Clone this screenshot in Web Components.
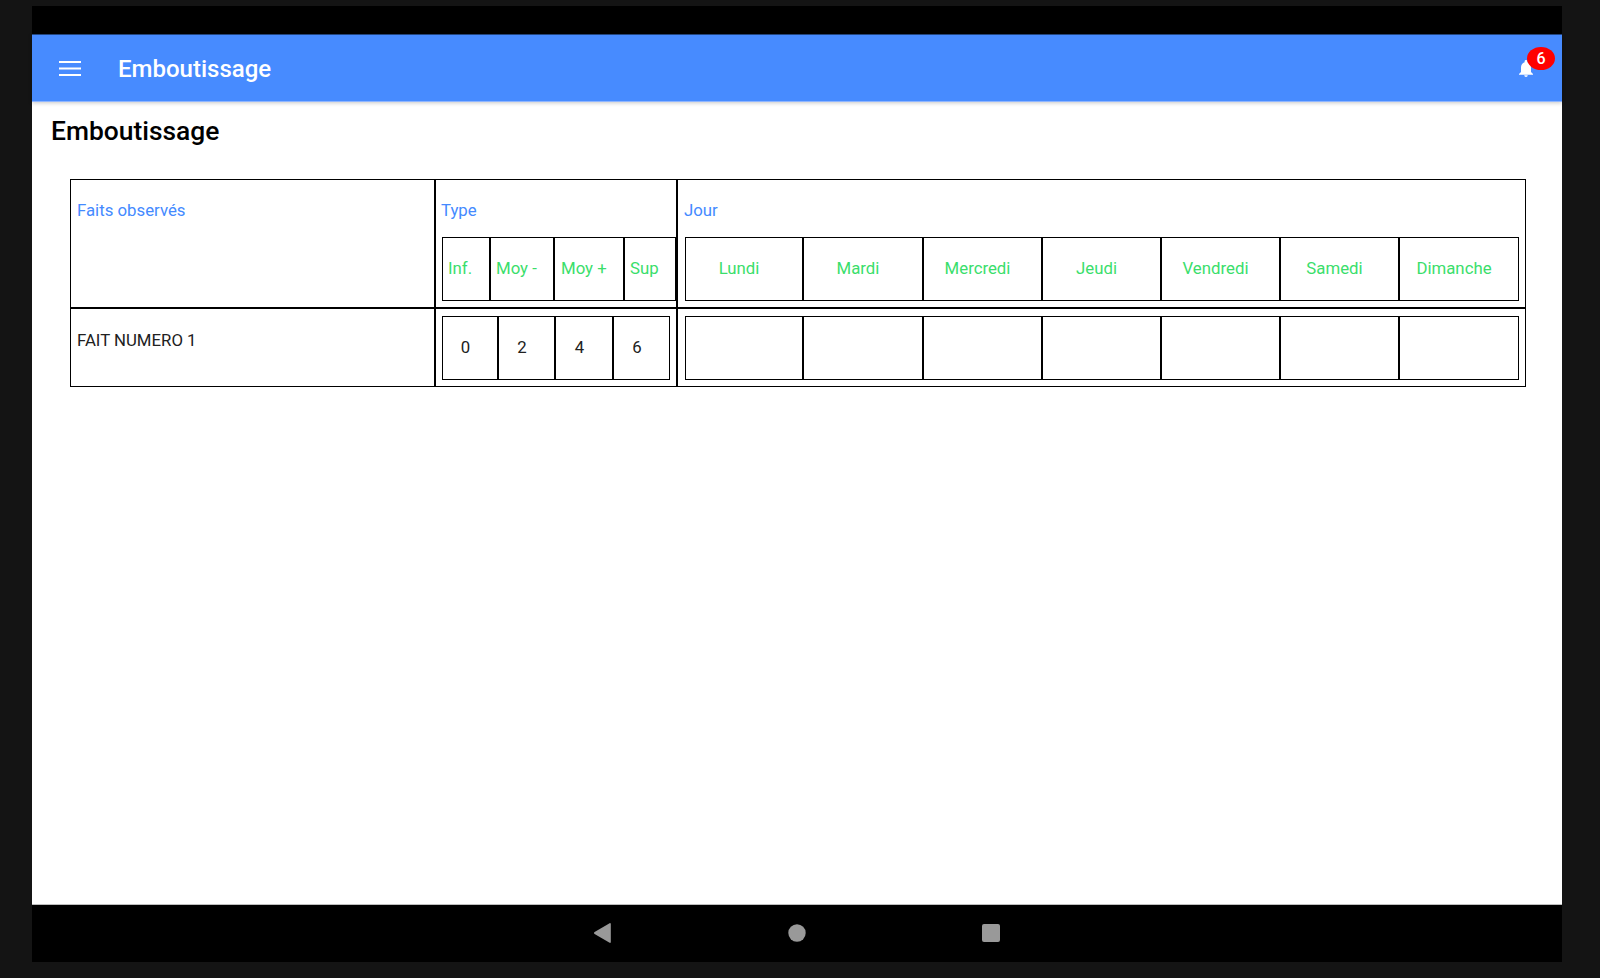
<!DOCTYPE html>
<html lang="fr">
<head>
<meta charset="utf-8">
<title>Emboutissage</title>
<style>
  html, body { margin: 0; height: 100%; background: #141414; }
  body { font-family: Roboto, "Liberation Sans", sans-serif; }
</style>
</head>
<body>
<device-frame>
  <app-toolbar slot="top" title="Emboutissage" count="6"></app-toolbar>
  <h-title>Emboutissage</h-title>
  <obs-table></obs-table>
</device-frame>

<script>
class DeviceFrame extends HTMLElement {
  constructor() {
    super();
    this.attachShadow({ mode: 'open' });
    this.shadowRoot.innerHTML = `
    <style>
      :host { display: block; height: 978px; padding: 6px 38px 16px 32px; box-sizing: border-box; background: #141414; }
      .screen { height: 100%; display: flex; flex-direction: column; background: #000; }
      .status { height: 28px; flex: none; }
      .content { flex: 1; min-height: 0; background: #fff; }
      .nav {
        height: 58px; flex: none; display: flex; align-items: center; justify-content: center; gap: 177px;
        border-top: 1px solid #bdbdbd; box-sizing: border-box; padding-bottom: 1px;
      }
      svg { display: block; }
      .recents { margin-left: -1px; }
    </style>
    <div class="screen">
      <div class="status"></div>
      <slot name="top"></slot>
      <div class="content"><slot></slot></div>
      <div class="nav">
        <svg width="17" height="20" viewBox="0 0 17 20"><path d="M15.600 0.200c.7-.3 1.200 .1 1.200 .8v18c0 .7-.5 1.100-1.200 .8L.6 11.100c-.8-.5-.8-1.700 0-2.200z" fill="#999"/></svg>
        <svg width="18" height="18" viewBox="0 0 18 18"><circle cx="9" cy="9" r="8.700" fill="#999"/></svg>
        <svg class="recents" width="18" height="18" viewBox="0 0 18 18"><rect width="18" height="18" rx="2" fill="#999"/></svg>
      </div>
    </div>`;
  }
}

class AppToolbar extends HTMLElement {
  constructor() {
    super();
    this.attachShadow({ mode: 'open' });
    const title = this.getAttribute('title');
    const count = this.getAttribute('count');
    this.shadowRoot.innerHTML = `
    <style>
      :host {
        display: flex; align-items: center; height: 68px; flex: none; position: relative; z-index: 1;
        box-sizing: border-box; border-top: 1px solid #234680; border-bottom: 1px solid #8fb6ff;
        background: #478bff; color: #fff; box-shadow: 0 1px 4px rgba(0,0,0,.22);
        padding: 0 7px 0 27px;
      }
      .menu { display: block; margin: 1px 37px 0 0; }
      h1 { flex: 1; margin: 1px 0 0; font-size: 24px; font-weight: 500; line-height: 1; }
      .bell { position: relative; width: 28px; height: 40px; }
      .bell svg { position: absolute; left: -8px; top: 12px; }
      .badge {
        position: absolute; left: 0; top: -1px; width: 28px; height: 23px; border-radius: 50%;
        background: #f00; font-size: 16px; font-weight: 500; line-height: 23px; text-align: center;
      }
    </style>
    <svg class="menu" width="22" height="15" viewBox="0 0 22 15"><path d="M0 0h22v2H0zM0 6.500h22v2H0zM0 13h22v2H0z" fill="#fff"/></svg>
    <h1>${title}</h1>
    <div class="bell">
      <svg width="14" height="17" viewBox="0 0 14 17"><path d="M7 17a1.800 1.800 0 0 0 1.800-1.700H5.200A1.800 1.800 0 0 0 7 17zm5-5V7.500c0-2.600-1.300-4.700-3.600-5.300V1.400a1.400 1.400 0 0 0-2.800 0v.8C3.300 2.800 2 4.900 2 7.500V12l-2 2v.8h14V14z" fill="#fff"/></svg>
      <span class="badge">${count}</span>
    </div>`;
  }
}

class HTitle extends HTMLElement {
  constructor() {
    super();
    this.attachShadow({ mode: 'open' });
    this.shadowRoot.innerHTML = `
    <style>
      :host { display: block; margin: 0 0 0 19px; padding-top: 14px; height: 63px; font-size: 26.400px; font-weight: 500; line-height: 30px; color: #000; }
    </style>
    <slot></slot>`;
  }
}

class ObsCell extends HTMLElement {
  constructor() {
    super();
    this.attachShadow({ mode: 'open' });
    this.shadowRoot.innerHTML = `
    <style>
      :host {
        display: flex; align-items: center; box-sizing: border-box; min-width: 0;
        height: 100%; padding: 0 5px 2px var(--cell-left, 5px); font-size: 16.800px; white-space: nowrap; color: inherit;
        border-left: 2px solid #000;
      }
      :host(:first-child) { border-left-width: 1px; }
      :host(:last-child) { border-right: 1px solid #000; }
      :host([center]) { justify-content: center; }
      :host([shift]) { padding-right: var(--cell-shift, 15px); }
    </style>
    <slot></slot>`;
  }
}

class ObsTable extends HTMLElement {
  constructor() {
    super();
    this.attachShadow({ mode: 'open' });
    const days = ['Lundi', 'Mardi', 'Mercredi', 'Jeudi', 'Vendredi', 'Samedi', 'Dimanche'];
    this.shadowRoot.innerHTML = `
    <style>
      :host {
        display: grid; grid-template-columns: 364px 242px 850px; grid-template-rows: 127px 79px;
        width: 1456px; margin-left: 38px; font-size: 16.800px; color: #212121;
        border-top: 1px solid #000; border-bottom: 1px solid #000;
      }
      .col { box-sizing: border-box; min-width: 0; border-left: 2px solid #000; }
      .col.first { border-left-width: 1px; padding: 0 6px; }
      .col.mid { padding: 0 0 0 6px; }
      .col.last { border-right: 1px solid #000; padding: 0 6px 0 7px; }
      .row2 { border-top: 2px solid #000; }
      .head { color: #448aff; height: 57px; display: flex; align-items: center; line-height: 20px; padding-top: 2px; box-sizing: border-box; }
      .mid .head, .last .head { margin-left: -1px; }
      .text { height: 20px; margin-top: 21px; line-height: 20px; }
      .cells { display: grid; height: 64px; border-top: 1px solid #000; border-bottom: 1px solid #000; box-sizing: border-box; }
      .types { grid-template-columns: 47px 64px 70px 53px; color: #3ade6b; }
      .types .plus { --cell-left: 6px; }
      .values { grid-template-columns: 55px 57px 58px 58px; margin: 7px 6px 0 0; --cell-shift: 14px; }
      .days { grid-template-columns: 117px 120px 119px 119px 119px 119px 121px; color: #3ade6b; }
      .empty { margin-top: 7px; }
    </style>
    <div class="col first">
      <div class="head">Faits observés</div>
    </div>
    <div class="col mid">
      <div class="head">Type</div>
      <div class="cells types">
        <obs-cell>Inf.</obs-cell><obs-cell>Moy -</obs-cell><obs-cell class="plus">Moy +</obs-cell><obs-cell>Sup</obs-cell>
      </div>
    </div>
    <div class="col last">
      <div class="head">Jour</div>
      <div class="cells days">
        ${days.map(d => `<obs-cell center shift>${d}</obs-cell>`).join('')}
      </div>
    </div>
    <div class="col first row2"><div class="text">FAIT NUMERO 1</div></div>
    <div class="col mid row2">
      <div class="cells values">
        ${[0, 2, 4, 6].map(v => `<obs-cell center shift>${v}</obs-cell>`).join('')}
      </div>
    </div>
    <div class="col last row2">
      <div class="cells days empty">
        ${days.map(() => `<obs-cell></obs-cell>`).join('')}
      </div>
    </div>`;
  }
}

customElements.define('obs-cell', ObsCell);
customElements.define('device-frame', DeviceFrame);
customElements.define('app-toolbar', AppToolbar);
customElements.define('h-title', HTitle);
customElements.define('obs-table', ObsTable);
</script>
</body>
</html>
